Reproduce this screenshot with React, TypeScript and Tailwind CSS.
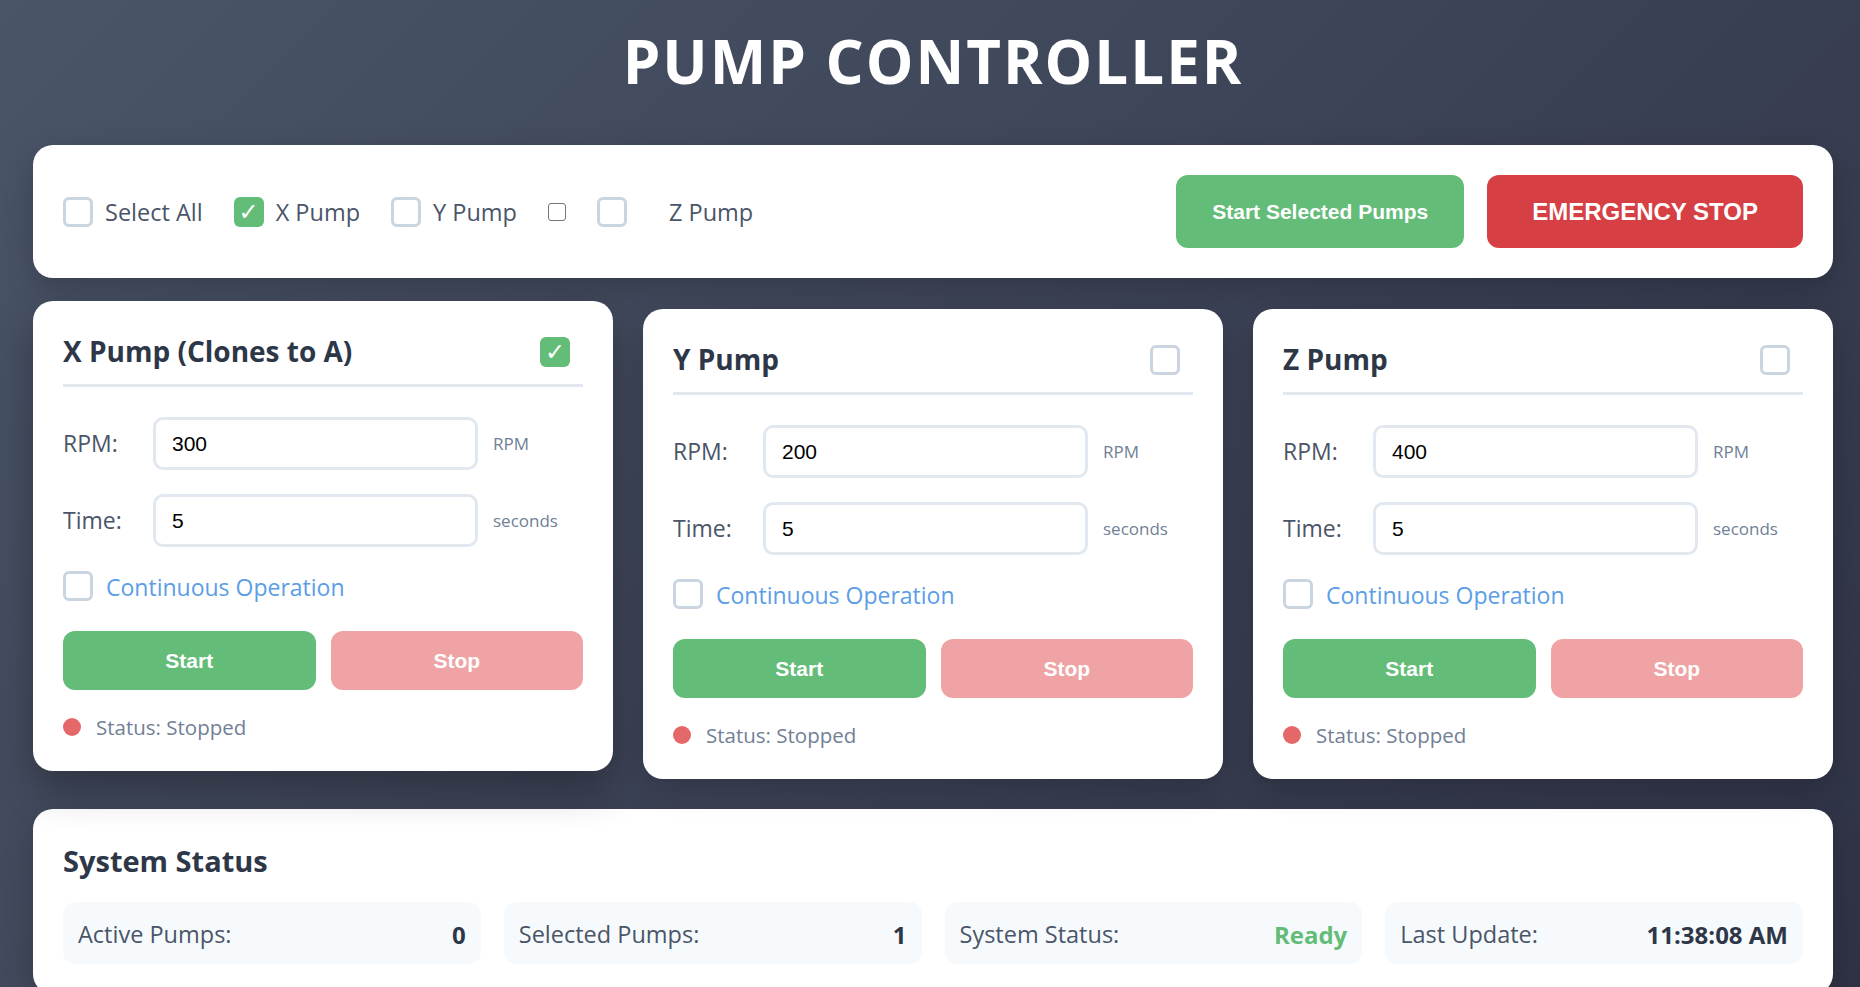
import React from 'react'

const arial = "font-['Liberation_Sans',Arial,sans-serif]"

function Box({ checked = false, className = '' }: { checked?: boolean; className?: string }) {
  if (checked) {
    return (
      <span
        className={`flex h-[30px] w-[30px] shrink-0 items-center justify-center rounded-[6px] bg-[#63bc78] font-['DejaVu_Sans',sans-serif] text-[24px] leading-none text-white ${className}`}
      >
        ✓
      </span>
    )
  }
  return (
    <span
      className={`block h-[30px] w-[30px] shrink-0 rounded-[6px] border-[3px] border-[#cbd5e0] bg-white ${className}`}
    />
  )
}

function Option({ label, checked = false }: { label: string; checked?: boolean }) {
  return (
    <div className="flex items-center gap-[12px]">
      <Box checked={checked} />
      <span className="pt-[3px] text-[23.5px] font-medium text-[#4a5568]">{label}</span>
    </div>
  )
}

function Field({ label, value, unit }: { label: string; value: string; unit: string }) {
  return (
    <div className="flex items-center">
      <span className="w-[90px] shrink-0 text-[23px] font-medium text-[#4a5568]">{label}</span>
      <input
        readOnly
        value={value}
        className={`h-[53px] min-w-0 flex-1 rounded-[10px] border-[3px] border-[#e2e8f0] bg-white px-[16px] text-[21px] text-black outline-none ${arial}`}
      />
      <span className="ml-[15px] w-[90px] shrink-0 text-[17px] text-[#718096]">{unit}</span>
    </div>
  )
}

function PumpCard({
  title,
  rpm,
  selected = false,
  raised = false,
}: {
  title: string
  rpm: string
  selected?: boolean
  raised?: boolean
}) {
  return (
    <div
      className={`rounded-[20px] bg-white p-[30px] ${
        raised
          ? '-translate-y-[8px] shadow-[0_18px_40px_rgba(0,0,0,0.3)]'
          : 'shadow-[0_10px_30px_rgba(0,0,0,0.2)]'
      }`}
    >
      <div className="mb-[30px] flex items-center justify-between border-b-[3px] border-[#e2e8f0] pb-[12px]">
        <h3 className="text-[28px] font-bold leading-[41px] text-[#2d3748]">{title}</h3>
        <Box checked={selected} className="mr-[13px]" />
      </div>
      <Field label="RPM:" value={rpm} unit="RPM" />
      <div className="mt-[24px]">
        <Field label="Time:" value="5" unit="seconds" />
      </div>
      <div className="mt-[22px] flex h-[33px] items-center gap-[13px]">
        <Box />
        <span className="pt-[3px] text-[23px] font-medium text-[#5b9ee6]">Continuous Operation</span>
      </div>
      <div className={`mt-[29px] flex gap-[15px] ${arial}`}>
        <button className="h-[59px] flex-1 rounded-[12px] bg-[#63bc78] text-[21px] font-bold text-white">
          Start
        </button>
        <button className="h-[59px] flex-1 rounded-[12px] bg-[#efa3a4] text-[21px] font-bold text-white">
          Stop
        </button>
      </div>
      <div className="mt-[22px] flex items-center gap-[15px]">
        <span className="h-[18px] w-[18px] rounded-full bg-[#e56869]" />
        <span className="pt-[2px] text-[20.5px] leading-[27px] text-[#718096]">Status: Stopped</span>
      </div>
    </div>
  )
}

function StatItem({ label, value, valueClass = 'text-[#2d3748]' }: { label: string; value: string; valueClass?: string }) {
  return (
    <div className="flex h-[62px] items-center justify-between rounded-[12px] bg-[#f7fafc] px-[15px] pt-[3px]">
      <span className="text-[23.5px] font-medium text-[#4a5568]">{label}</span>
      <span className={`text-[24px] font-bold ${valueClass}`}>{value}</span>
    </div>
  )
}

export default function App() {
  return (
    <div className="min-h-screen bg-[linear-gradient(135deg,#4a5568_0%,#2f3245_100%)] pb-[30px] pt-[22px] font-['Open_Sans','Noto_Sans',sans-serif]">
      <div className="ml-[33px] w-[1800px]">
        <h1 className="mb-[45px] text-center text-[60px] font-bold leading-[78px] tracking-[2px] text-white">
          PUMP CONTROLLER
        </h1>

        <div className="flex items-center justify-between rounded-[20px] bg-white px-[30px] py-[30px] shadow-[0_10px_30px_rgba(0,0,0,0.2)]">
          <div className="flex items-center gap-[31px]">
            <Option label="Select All" />
            <Option label="X Pump" checked />
            <Option label="Y Pump" />
            <span className="block h-[18px] w-[18px] rounded-[3px] border-[1.5px] border-[#767676] bg-white" />
            <div className="flex items-center gap-[42px]">
              <Box />
              <span className="pt-[3px] text-[23.5px] font-medium text-[#4a5568]">Z Pump</span>
            </div>
          </div>
          <div className={`flex items-center gap-[23px] ${arial}`}>
            <button className="h-[73px] rounded-[12px] bg-[#63bc78] px-[36px] text-[21px] font-bold text-white">
              Start Selected Pumps
            </button>
            <button className="h-[73px] rounded-[12px] bg-[#d64045] px-[45px] text-[24px] font-bold text-white">
              EMERGENCY STOP
            </button>
          </div>
        </div>

        <div className="mt-[31px] grid grid-cols-3 items-start gap-[30px]">
          <PumpCard title="X Pump (Clones to A)" rpm="300" selected raised />
          <PumpCard title="Y Pump" rpm="200" />
          <PumpCard title="Z Pump" rpm="400" />
        </div>

        <div className="mt-[30px] rounded-[20px] bg-white p-[30px] shadow-[0_10px_30px_rgba(0,0,0,0.2)]">
          <h2 className="mb-[21px] pt-[2px] text-[29px] font-bold leading-[40px] text-[#2d3748]">System Status</h2>
          <div className="grid grid-cols-4 gap-[23px]">
            <StatItem label="Active Pumps:" value="0" />
            <StatItem label="Selected Pumps:" value="1" />
            <StatItem label="System Status:" value="Ready" valueClass="text-[#63bc78]" />
            <StatItem label="Last Update:" value="11:38:08 AM" />
          </div>
        </div>
      </div>
    </div>
  )
}
